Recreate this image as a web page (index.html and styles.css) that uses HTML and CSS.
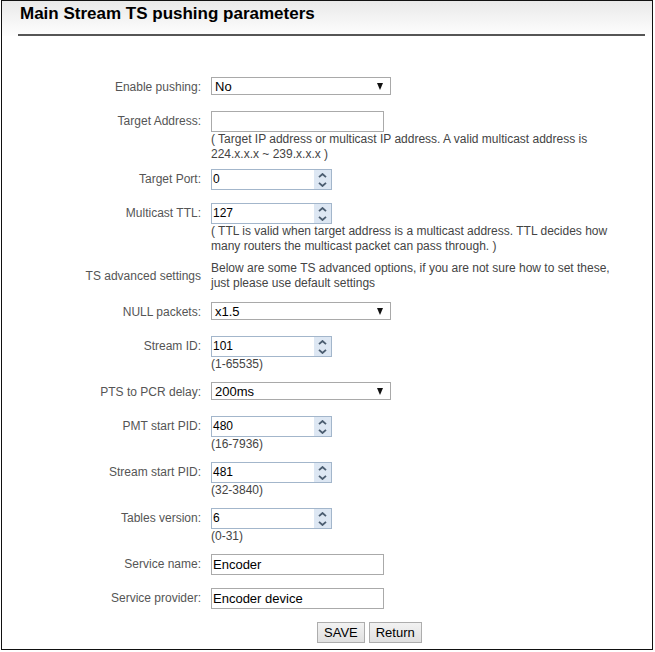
FILE: index.html
```html
<!DOCTYPE html>
<html>
<head>
<meta charset="utf-8">
<link rel="stylesheet" href="styles.css">
</head>
<body>
<div class="panel">
  <div class="head">
    <h1 class="title">Main Stream TS pushing parameters</h1>
  </div>
  <form class="form">
    <div class="row">
      <div class="lbl">Enable pushing:</div>
      <div class="ctl">
        <span class="sel"><span class="sel-text">No</span><span class="caret"></span></span>
      </div>
    </div>
    <div class="row">
      <div class="lbl">Target Address:</div>
      <div class="ctl">
        <span class="txt"></span>
        <div class="help two">( Target IP address or multicast IP address. A valid multicast address is 224.x.x.x ~ 239.x.x.x )</div>
      </div>
    </div>
    <div class="row">
      <div class="lbl">Target Port:</div>
      <div class="ctl">
        <span class="num"><span class="num-text">0</span><span class="spin"><svg width="9" height="5" viewBox="0 0 9 5"><polyline points="1,4.2 4.5,1 8,4.2" fill="none" stroke="#4b5d70" stroke-width="1.8"/></svg><svg width="9" height="5" viewBox="0 0 9 5"><polyline points="1,0.8 4.5,4 8,0.8" fill="none" stroke="#4b5d70" stroke-width="1.8"/></svg></span></span>
      </div>
    </div>
    <div class="row">
      <div class="lbl">Multicast TTL:</div>
      <div class="ctl">
        <span class="num"><span class="num-text">127</span><span class="spin"><svg width="9" height="5" viewBox="0 0 9 5"><polyline points="1,4.2 4.5,1 8,4.2" fill="none" stroke="#4b5d70" stroke-width="1.8"/></svg><svg width="9" height="5" viewBox="0 0 9 5"><polyline points="1,0.8 4.5,4 8,0.8" fill="none" stroke="#4b5d70" stroke-width="1.8"/></svg></span></span>
        <div class="help two">( TTL is valid when target address is a multicast address. TTL decides how many routers the multicast packet can pass through. )</div>
      </div>
    </div>
    <div class="row center">
      <div class="lbl">TS advanced settings</div>
      <div class="ctl">
        <div class="note">Below are some TS advanced options, if you are not sure how to set these, just please use default settings</div>
      </div>
    </div>
    <div class="row">
      <div class="lbl">NULL packets:</div>
      <div class="ctl">
        <span class="sel"><span class="sel-text">x1.5</span><span class="caret"></span></span>
      </div>
    </div>
    <div class="row">
      <div class="lbl">Stream ID:</div>
      <div class="ctl">
        <span class="num"><span class="num-text">101</span><span class="spin"><svg width="9" height="5" viewBox="0 0 9 5"><polyline points="1,4.2 4.5,1 8,4.2" fill="none" stroke="#4b5d70" stroke-width="1.8"/></svg><svg width="9" height="5" viewBox="0 0 9 5"><polyline points="1,0.8 4.5,4 8,0.8" fill="none" stroke="#4b5d70" stroke-width="1.8"/></svg></span></span>
        <div class="help">(1-65535)</div>
      </div>
    </div>
    <div class="row">
      <div class="lbl">PTS to PCR delay:</div>
      <div class="ctl">
        <span class="sel"><span class="sel-text">200ms</span><span class="caret"></span></span>
      </div>
    </div>
    <div class="row">
      <div class="lbl">PMT start PID:</div>
      <div class="ctl">
        <span class="num"><span class="num-text">480</span><span class="spin"><svg width="9" height="5" viewBox="0 0 9 5"><polyline points="1,4.2 4.5,1 8,4.2" fill="none" stroke="#4b5d70" stroke-width="1.8"/></svg><svg width="9" height="5" viewBox="0 0 9 5"><polyline points="1,0.8 4.5,4 8,0.8" fill="none" stroke="#4b5d70" stroke-width="1.8"/></svg></span></span>
        <div class="help">(16-7936)</div>
      </div>
    </div>
    <div class="row">
      <div class="lbl">Stream start PID:</div>
      <div class="ctl">
        <span class="num"><span class="num-text">481</span><span class="spin"><svg width="9" height="5" viewBox="0 0 9 5"><polyline points="1,4.2 4.5,1 8,4.2" fill="none" stroke="#4b5d70" stroke-width="1.8"/></svg><svg width="9" height="5" viewBox="0 0 9 5"><polyline points="1,0.8 4.5,4 8,0.8" fill="none" stroke="#4b5d70" stroke-width="1.8"/></svg></span></span>
        <div class="help">(32-3840)</div>
      </div>
    </div>
    <div class="row">
      <div class="lbl">Tables version:</div>
      <div class="ctl">
        <span class="num"><span class="num-text">6</span><span class="spin"><svg width="9" height="5" viewBox="0 0 9 5"><polyline points="1,4.2 4.5,1 8,4.2" fill="none" stroke="#4b5d70" stroke-width="1.8"/></svg><svg width="9" height="5" viewBox="0 0 9 5"><polyline points="1,0.8 4.5,4 8,0.8" fill="none" stroke="#4b5d70" stroke-width="1.8"/></svg></span></span>
        <div class="help">(0-31)</div>
      </div>
    </div>
    <div class="row">
      <div class="lbl">Service name:</div>
      <div class="ctl">
        <span class="txt">Encoder</span>
      </div>
    </div>
    <div class="row">
      <div class="lbl">Service provider:</div>
      <div class="ctl">
        <span class="txt">Encoder device</span>
      </div>
    </div>
    <div class="actions">
      <button type="button" class="btn">SAVE</button>
      <button type="button" class="btn">Return</button>
    </div>
  </form>
</div>
</body>
</html>
```
FILE: styles.css
```css
html, body {
  margin: 0;
  padding: 0;
  background: #fff;
}
body {
  font-family: "Liberation Sans", Arial, sans-serif;
  font-size: 12px;
  color: #333;
}
.panel {
  margin-left: 1px;
  width: 650px;
  height: 648px;
  border: 1px solid #111;
  box-sizing: content-box;
}
.head {
  background: linear-gradient(#e9e9e9 0px, #fbfbfb 30px, #fff 38px);
  padding: 2px 7px 0 16px;
}
.title {
  margin: 0;
  padding: 0 0 0 2px;
  font-size: 17px;
  line-height: 22px;
  font-weight: bold;
  color: #000;
  height: 31px;
  border-bottom: 2px solid #555;
}
.form {
  display: flex;
  flex-direction: column;
  gap: 11px;
  padding-top: 41px;
}
.row {
  display: flex;
  align-items: flex-start;
  min-height: 23px;
}
.row.center {
  align-items: center;
}
.lbl {
  width: 199px;
  flex: none;
  text-align: right;
  color: #555;
  line-height: 20px;
}
.ctl {
  margin-left: 10px;
  width: 412px;
}
.sel {
  display: flex;
  align-items: center;
  justify-content: space-between;
  box-sizing: border-box;
  width: 180px;
  height: 18px;
  border: 1px solid #a9a9a9;
  padding: 0 7px 0 3px;
  font-size: 13px;
  color: #000;
  background: #fff;
}
.caret {
  width: 0;
  height: 0;
  border-left: 3.5px solid transparent;
  border-right: 3.5px solid transparent;
  border-top: 7px solid #111;
}
.txt {
  display: flex;
  align-items: center;
  box-sizing: border-box;
  width: 173px;
  height: 21px;
  border: 1px solid #aaa;
  padding-left: 1px;
  font-size: 13px;
  color: #000;
  background: #fff;
}
.num {
  display: flex;
  box-sizing: border-box;
  width: 121px;
  height: 21px;
  border: 1px solid #a3b6cb;
  font-size: 12px;
  color: #000;
  background: #fff;
}
.num-text {
  flex: 1;
  padding-left: 1px;
  line-height: 19px;
}
.spin {
  width: 17px;
  display: flex;
  flex-direction: column;
  align-items: center;
  justify-content: center;
  gap: 4px;
  background: #dde7f3;
}
.spin svg {
  display: block;
}
.help {
  color: #444;
  line-height: 14px;
}
.help.two {
  line-height: 15px;
  margin-bottom: -4px;
}
.note {
  color: #444;
  line-height: 15px;
}
.actions {
  display: flex;
  gap: 4px;
  padding-left: 315px;
}
.btn {
  font-family: "Liberation Sans", Arial, sans-serif;
  font-size: 13px;
  color: #000;
  height: 21px;
  padding: 0 6px;
  border: 1px solid #adadad;
  border-radius: 0;
  background: linear-gradient(#f2f2f2, #e0e0e0);
  margin: 0;
}
```
